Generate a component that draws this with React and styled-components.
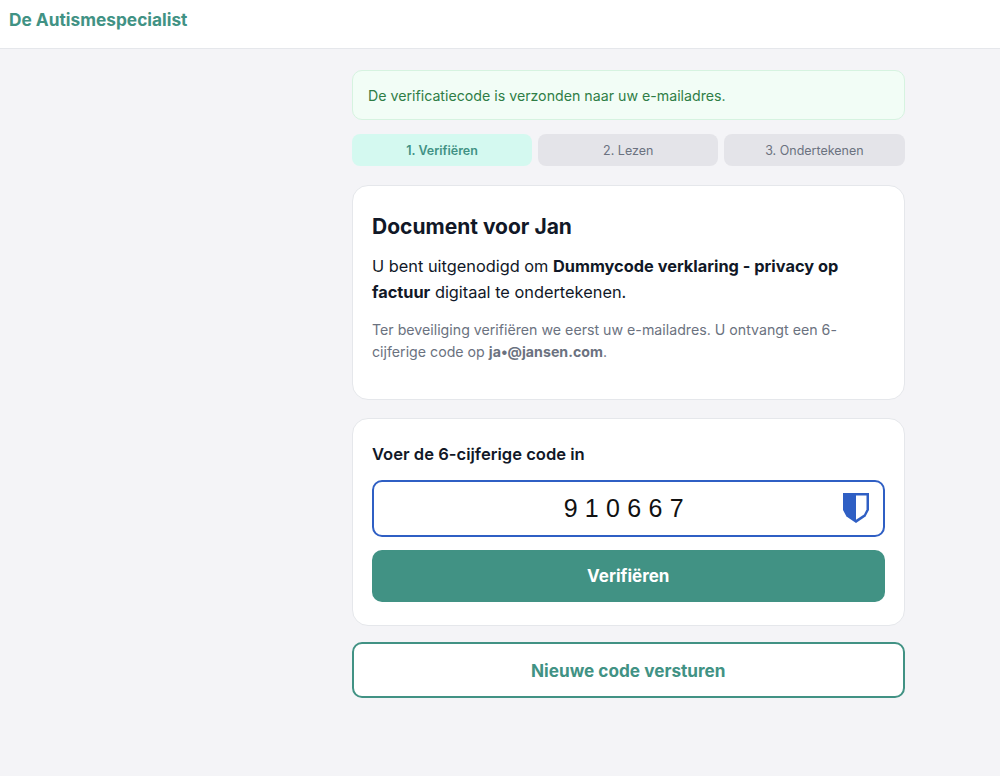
import React from "react";
import styled, { createGlobalStyle } from "styled-components";

const Global = createGlobalStyle`
  * { box-sizing: border-box; }
  html, body { margin: 0; padding: 0; background: #f4f4f7; }
  body { font-family: Inter, "Liberation Sans", sans-serif; color: #111827; height: 776px; overflow: hidden; }
`;

const Header = styled.header`
  height: 49px;
  background: #fff;
  border-bottom: 1px solid #e5e7eb;
  padding: 10px 9px 0;
`;
const Brand = styled.div`
  font-size: 17.3px;
  line-height: 20px;
  font-weight: 700;
  color: #419284;
`;
const Main = styled.main`
  width: 552.5px;
  margin-left: 352px;
  padding-top: 21px;
  display: flex;
  flex-direction: column;
`;
const Alert = styled.div`
  height: 50px;
  display: flex;
  align-items: center;
  padding: 0 15px;
  background: #f2fdf6;
  border: 1px solid #d6f3e0;
  border-radius: 10px;
  color: #2f7d46;
  font-size: 14.2px;
`;
const Steps = styled.div`
  display: grid;
  grid-template-columns: repeat(3, 1fr);
  gap: 6px;
  margin-top: 14px;
`;
const Step = styled.div`
  height: 32px;
  border-radius: 8px;
  display: flex;
  align-items: center;
  justify-content: center;
  font-size: 12.5px;
  font-weight: ${p => (p.$active ? 600 : 400)};
  background: ${p => (p.$active ? "#d4f9f0" : "#e4e4e9")};
  color: ${p => (p.$active ? "#419284" : "#6b7280")};
`;
const Card = styled.section`
  background: #fff;
  border: 1px solid #e5e7eb;
  border-radius: 16px;
  padding: 19px;
`;
const IntroCard = styled(Card)`
  margin-top: 19px;
  height: 215px;
  padding-top: 27px;
`;
const Title = styled.h1`
  margin: 0;
  font-size: 21px;
  line-height: 28px;
  font-weight: 700;
`;
const Lead = styled.p`
  margin: 12px 0 0;
  font-size: 16.35px;
  line-height: 26px;
`;
const Note = styled.p`
  margin: 14px 0 0;
  font-size: 14.2px;
  line-height: 22px;
  color: #6b7280;
`;
const CodeCard = styled(Card)`
  margin-top: 18px;
  height: 208px;
  padding-top: 25px;
`;
const Label = styled.label`
  display: block;
  font-size: 16.6px;
  line-height: 20px;
  font-weight: 600;
`;
const InputWrap = styled.div`
  position: relative;
  margin-top: 16px;
`;
const CodeInput = styled.div`
  height: 57px;
  border: 2px solid #2f5fc4;
  border-radius: 10px;
  background: #fff;
  display: flex;
  align-items: center;
  justify-content: center;
  padding-right: 2px;
  font-family: "Liberation Sans", Arial, sans-serif;
  font-size: 25px;
  letter-spacing: 7.3px;
  color: #111;
`;
const ShieldSlot = styled.span`
  position: absolute;
  right: 16px;
  top: 12px;
  display: flex;
`;
const Primary = styled.button`
  display: block;
  width: 100%;
  height: 52px;
  margin-top: 13px;
  border: 0;
  border-radius: 10px;
  background: #419284;
  color: #fff;
  font: 700 17px Inter, "Liberation Sans", sans-serif;
`;
const Secondary = styled.button`
  display: block;
  width: 100%;
  height: 56px;
  margin-top: 16px;
  border: 2px solid #419284;
  border-radius: 10px;
  background: #fff;
  color: #419284;
  font: 700 17.2px Inter, "Liberation Sans", sans-serif;
`;

const Shield = () => (
  <svg width="26" height="31" viewBox="0 0 26 31">
    <path d="M0 1H26V18L22.5 24.5L13 31L3.5 24.5L0 18Z" fill="#2f5fc4" />
    <path d="M13 3.5H23.5V17.5L21 22.5L13 27.8Z" fill="#fff" />
  </svg>
);

export default function App() {
  return (
    <>
      <Global />
      <Header>
        <Brand>De Autismespecialist</Brand>
      </Header>
      <Main>
        <Alert>De verificatiecode is verzonden naar uw e-mailadres.</Alert>
        <Steps>
          <Step $active>1. Verifiëren</Step>
          <Step>2. Lezen</Step>
          <Step>3. Ondertekenen</Step>
        </Steps>
        <IntroCard>
          <Title>Document voor Jan</Title>
          <Lead>
            U bent uitgenodigd om <strong>Dummycode verklaring - privacy op factuur</strong> digitaal te ondertekenen.
          </Lead>
          <Note>
            Ter beveiliging verifiëren we eerst uw e-mailadres. U ontvangt een 6-cijferige code op <strong>ja•@jansen.com</strong>.
          </Note>
        </IntroCard>
        <CodeCard>
          <Label>Voer de 6-cijferige code in</Label>
          <InputWrap>
            <CodeInput>910667</CodeInput>
            <ShieldSlot><Shield /></ShieldSlot>
          </InputWrap>
          <Primary>Verifiëren</Primary>
        </CodeCard>
        <Secondary>Nieuwe code versturen</Secondary>
      </Main>
    </>
  );
}
